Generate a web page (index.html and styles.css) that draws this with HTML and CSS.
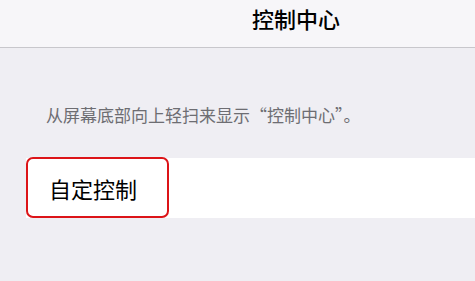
FILE: index.html
```html
<!DOCTYPE html>
<html lang="zh-Hans">
<head>
<meta charset="utf-8">
<link rel="stylesheet" href="styles.css">
</head>
<body>
<header class="navbar">
  <h1 class="title">控制中心</h1>
</header>
<main class="content">
  <p class="hint">从屏幕底部向上轻扫来显示“控制中心”。</p>
  <div class="row">
    <div class="row-label">自定控制</div>
  </div>
</main>
</body>
</html>
```
FILE: styles.css
```css
html, body {
  margin: 0;
  padding: 0;
}
body {
  width: 475px;
  height: 281px;
  overflow: hidden;
  background: #efeef3;
  font-family: "Noto Sans CJK SC", "Noto Sans", sans-serif;
  color: #000;
}
.navbar {
  height: 48px;
  box-sizing: border-box;
  background: #f7f6f9;
  border-bottom: 1px solid #c8c7cc;
  display: flex;
  align-items: center;
  padding-left: 252px;
}
.title {
  margin: 0;
  font-size: 22px;
  font-weight: 500;
  line-height: 1;
  margin-top: -12px;
}
.content {
  display: flex;
  flex-direction: column;
}
.hint {
  margin: 56px 0 0 0;
  padding-left: 46px;
  font-size: 17px;
  line-height: 22px;
  color: #6d6d72;
}
.row {
  margin-top: 32px;
  margin-left: 26px;
  height: 60px;
  background: #fff;
  display: flex;
  align-items: center;
}
.row-label {
  box-sizing: border-box;
  width: 143px;
  height: 61px;
  margin-top: -1px;
  border: 2px solid #dc1418;
  border-radius: 7px;
  padding-left: 21px;
  display: flex;
  align-items: center;
  font-size: 22px;
  background: #fff;
}
```
